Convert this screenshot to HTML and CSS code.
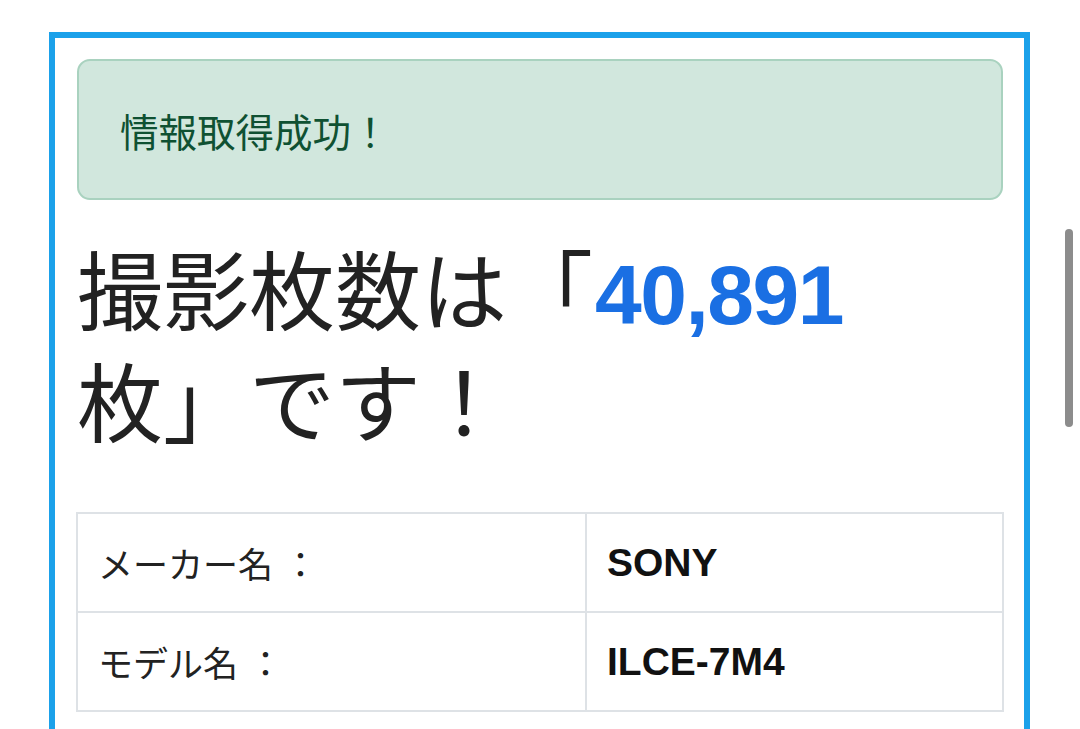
FILE: index.html
```html
<!DOCTYPE html>
<html lang="ja">
<head>
<meta charset="utf-8">
<title>撮影枚数</title>
<link rel="stylesheet" href="styles.css">
</head>
<body>
<div class="card">
  <div class="alert">情報取得成功！</div>
  <h1 class="count">撮影枚数は「<span class="num">40,891</span>枚」です！</h1>
  <table class="info">
    <tr><td class="label">メーカー名<span class="colon">：</span></td><td class="value">SONY</td></tr>
    <tr><td class="label">モデル名<span class="colon">：</span></td><td class="value">ILCE-7M4</td></tr>
  </table>
</div>
<div class="scrollbar"></div>
</body>
</html>
```
FILE: styles.css
```css
html, body {
  margin: 0;
  padding: 0;
  background: #ffffff;
  overflow: hidden;
  height: 729px;
}
body {
  font-family: "Liberation Sans", "Noto Sans CJK JP", sans-serif;
  color: #212529;
}
.card {
  margin: 32px 50px 0 49px;
  border: 6px solid #1ba1ea;
  border-bottom: none;
  padding: 21px 21px 40px 22px;
  height: 800px;
  box-sizing: border-box;
}
.alert {
  height: 141px;
  box-sizing: border-box;
  border: 2px solid #a9d2bf;
  border-radius: 13px;
  background: #d1e7dd;
  color: #0f5132;
  font-family: "Noto Sans CJK JP", sans-serif;
  font-size: 38.5px;
  display: flex;
  align-items: center;
  padding-left: 41px;
}
.count {
  margin: 39px 0 0 0;
  max-width: 820px;
  font-family: "Liberation Sans", "Noto Sans CJK JP", sans-serif;
  font-size: 86px;
  font-weight: 400;
  line-height: 111px;
  color: #222222;
}
.num {
  color: #1a6fe3;
  font-weight: 700;
  font-size: 84px;
  letter-spacing: -1.5px;
  margin-left: 2px;
}
.info {
  margin-top: 50px;
  width: 928px;
  border-collapse: collapse;
  margin-left: -1px;
}
.info td {
  border: 2px solid #dee2e6;
  height: 97px;
  padding: 0 20px;
  vertical-align: middle;
}
.label {
  width: 467px;
  font-family: "Noto Sans CJK JP", sans-serif;
  font-size: 35px;
  color: #222222;
}
.colon {
  margin-left: 10px;
}
.value {
  font-family: "Liberation Sans", "Noto Sans CJK JP", sans-serif;
  font-size: 39px;
  font-weight: 700;
  color: #111111;
}
.scrollbar {
  position: absolute;
  left: 1065px;
  top: 229px;
  width: 8px;
  height: 198px;
  border-radius: 4px;
  background: #8c8c8c;
}
```
